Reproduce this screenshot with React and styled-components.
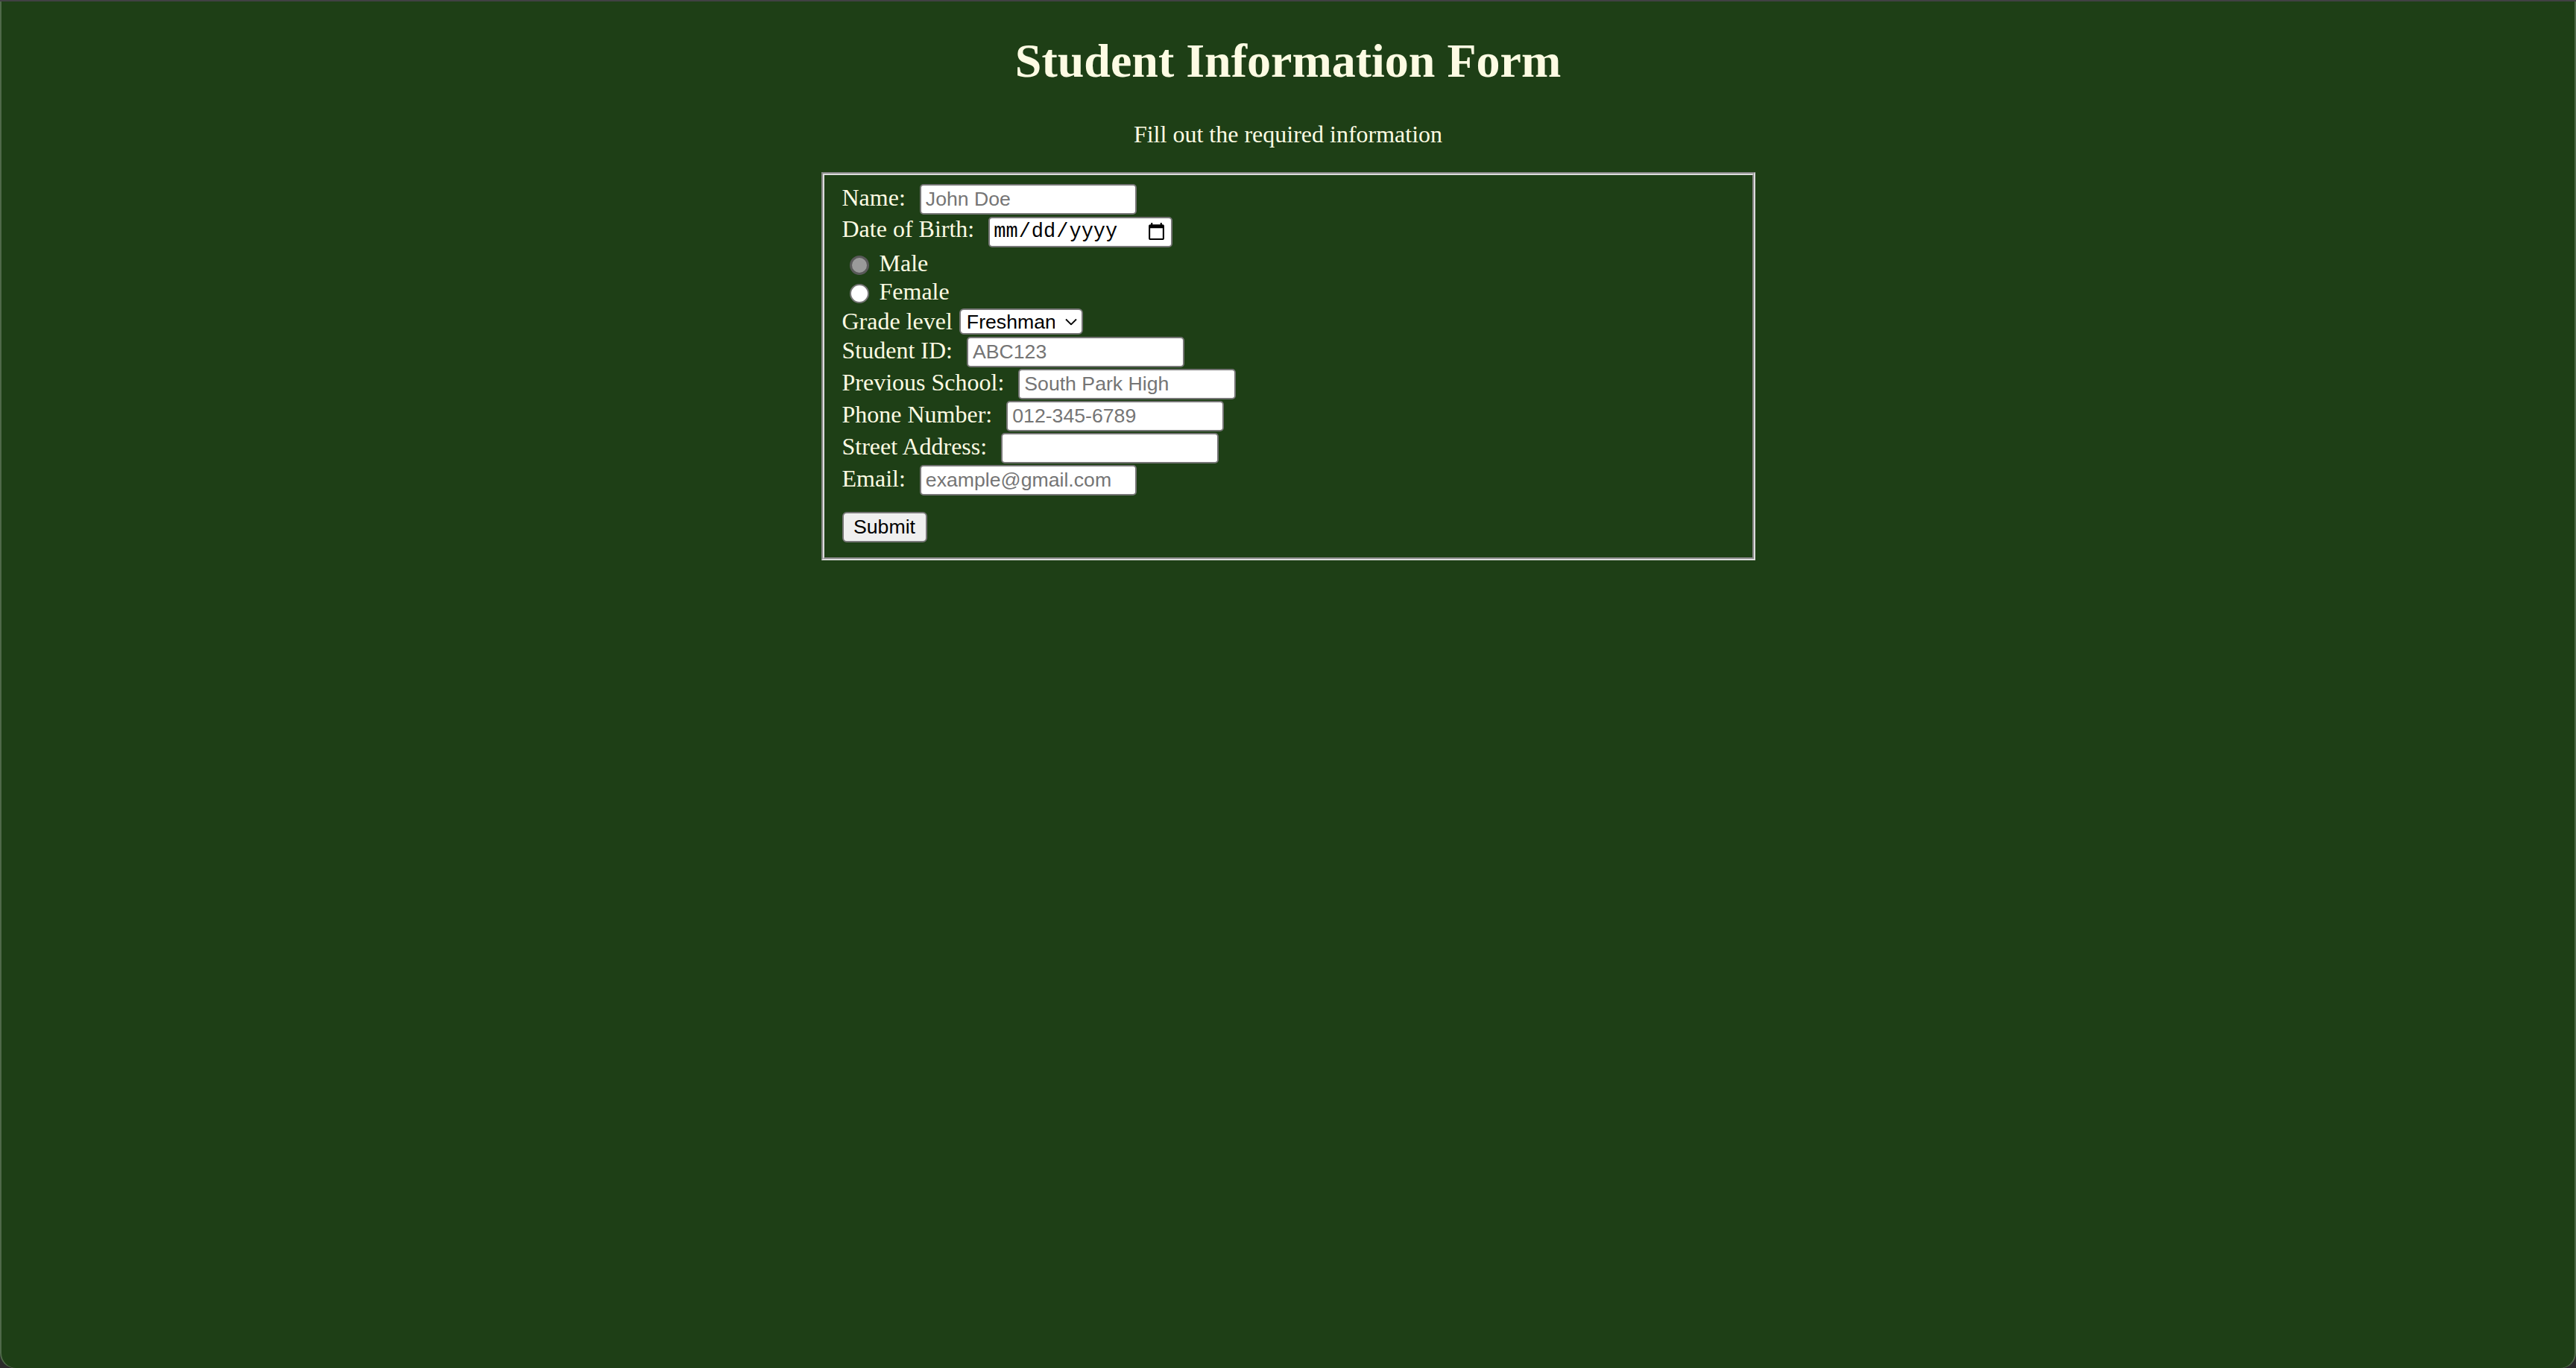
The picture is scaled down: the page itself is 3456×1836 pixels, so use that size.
import React from "react";
import styled, { createGlobalStyle } from "styled-components";

const GlobalStyle = createGlobalStyle`
  html, body {
    margin: 0;
    padding: 0;
    background: #2b2b2b;
  }
`;

const Page = styled.div`
  box-sizing: border-box;
  height: 100vh;
  overflow: hidden;
  background-color: #1e3f16;
  border-top: 2px solid #414143;
  border-radius: 0 0 20px 20px;
  box-shadow: inset 2px 0 0 rgba(255, 255, 255, 0.22),
    inset -2px 0 0 rgba(255, 255, 255, 0.22);
  font-family: "Liberation Serif", "Times New Roman", serif;
  color: #fdfbe3;
`;

const Title = styled.h1`
  margin: 43px 0;
  font-size: 64px;
  line-height: 74px;
  font-weight: 700;
  text-align: center;
`;

const Subtitle = styled.p`
  margin: 0 0 32px;
  font-size: 32px;
  line-height: 37px;
  text-align: center;
`;

const Fieldset = styled.fieldset`
  box-sizing: border-box;
  width: 1253px;
  min-inline-size: auto;
  margin: 0 auto;
  padding: 11px 24px 20px;
  border: 4px groove #dcdcdc;
`;

const Stack = styled.div`
  display: flex;
  flex-direction: column;
`;

const Row = styled.div`
  display: flex;
  align-items: baseline;
  gap: ${(props) => props.$gap ?? 19}px;
  height: 43px;
`;

const RadioRow = styled.label`
  box-sizing: border-box;
  display: flex;
  align-items: center;
  gap: 8px;
  height: ${(props) => (props.$first ? 40 : 38)}px;
  padding-top: ${(props) => (props.$first ? 2 : 0)}px;
  font-size: 32px;
  line-height: 37px;
`;

const SelectRow = styled.div`
  box-sizing: border-box;
  display: flex;
  align-items: center;
  gap: 9px;
  height: 41px;
  padding-top: 2px;
`;

const Label = styled.label`
  font-size: 32px;
  line-height: 37px;
  white-space: nowrap;
`;

const TextInput = styled.input`
  box-sizing: border-box;
  width: ${(props) => props.$width ?? 292}px;
  height: 41px;
  margin: 1px 0 0;
  padding: 0 6px;
  border: 2px solid #767676;
  border-radius: 5px;
  background: #fff;
  color: #000;
  font-family: "Liberation Sans", Arial, sans-serif;
  font-size: 26.67px;
  outline: none;

  &::placeholder {
    color: #757575;
  }
`;

const DateInput = styled(TextInput)`
  padding: 0 4px;
  font-family: "Liberation Mono", "Courier New", monospace;
  font-size: 27px;
`;

const Radio = styled.input`
  appearance: none;
  box-sizing: border-box;
  flex: none;
  width: 26px;
  height: 26px;
  margin: 6px 6px 0 10px;
  border-radius: 50%;
  border: 2px solid #767676;
  background: #fff;

  &:checked {
    border: 3px solid #5a5a5a;
    background: #9a9a9a;
  }
`;

const SelectWrap = styled.span`
  position: relative;
  display: inline-flex;
`;

const Select = styled.select`
  appearance: none;
  box-sizing: border-box;
  width: 166px;
  height: 35px;
  padding: 0 36px 0 8px;
  border: 2px solid #767676;
  border-radius: 6px;
  background: #fff;
  color: #000;
  font-family: "Liberation Sans", Arial, sans-serif;
  font-size: 26.67px;
  outline: none;
`;

const Chevron = styled.svg`
  position: absolute;
  right: 8px;
  top: 50%;
  transform: translateY(-50%);
  pointer-events: none;
`;

const SubmitButton = styled.button`
  align-self: flex-start;
  box-sizing: border-box;
  width: 114px;
  height: 41px;
  margin-top: 21px;
  padding: 0;
  border: 2px solid #767676;
  border-radius: 6px;
  background: #efefef;
  color: #000;
  font-family: "Liberation Sans", Arial, sans-serif;
  font-size: 26.67px;
`;

const App = () => {
  return (
    <Page>
      <GlobalStyle />
      <Title>Student Information Form</Title>
      <Subtitle>Fill out the required information</Subtitle>
      <form onSubmit={(e) => e.preventDefault()}>
        <Fieldset>
          <Stack>
            <Row>
              <Label htmlFor="name">Name:</Label>
              <TextInput id="name" $width={291} placeholder="John Doe" />
            </Row>
            <Row>
              <Label htmlFor="dob">Date of Birth:</Label>
              <DateInput id="dob" type="date" $width={247} />
            </Row>
            <RadioRow $first>
              <Radio type="radio" name="gender" defaultChecked />
              Male
            </RadioRow>
            <RadioRow>
              <Radio type="radio" name="gender" />
              Female
            </RadioRow>
            <SelectRow>
              <Label htmlFor="grade">Grade level</Label>
              <SelectWrap>
                <Select id="grade" defaultValue="Freshman">
                  <option>Freshman</option>
                  <option>Sophomore</option>
                  <option>Junior</option>
                  <option>Senior</option>
                </Select>
                <Chevron width="16" height="9" viewBox="0 0 16 9">
                  <path
                    d="M1 1l7 7 7-7"
                    fill="none"
                    stroke="#000"
                    strokeWidth="1.8"
                  />
                </Chevron>
              </SelectWrap>
            </SelectRow>
            <Row>
              <Label htmlFor="sid">Student ID:</Label>
              <TextInput id="sid" placeholder="ABC123" />
            </Row>
            <Row>
              <Label htmlFor="prev">Previous School:</Label>
              <TextInput id="prev" placeholder="South Park High" />
            </Row>
            <Row>
              <Label htmlFor="phone">Phone Number:</Label>
              <TextInput id="phone" type="tel" placeholder="012-345-6789" />
            </Row>
            <Row>
              <Label htmlFor="street">Street Address:</Label>
              <TextInput id="street" />
            </Row>
            <Row>
              <Label htmlFor="email">Email:</Label>
              <TextInput
                id="email"
                type="email"
                $width={291}
                placeholder="example@gmail.com"
              />
            </Row>
            <SubmitButton type="submit">Submit</SubmitButton>
          </Stack>
        </Fieldset>
      </form>
    </Page>
  );
};

export default App;
